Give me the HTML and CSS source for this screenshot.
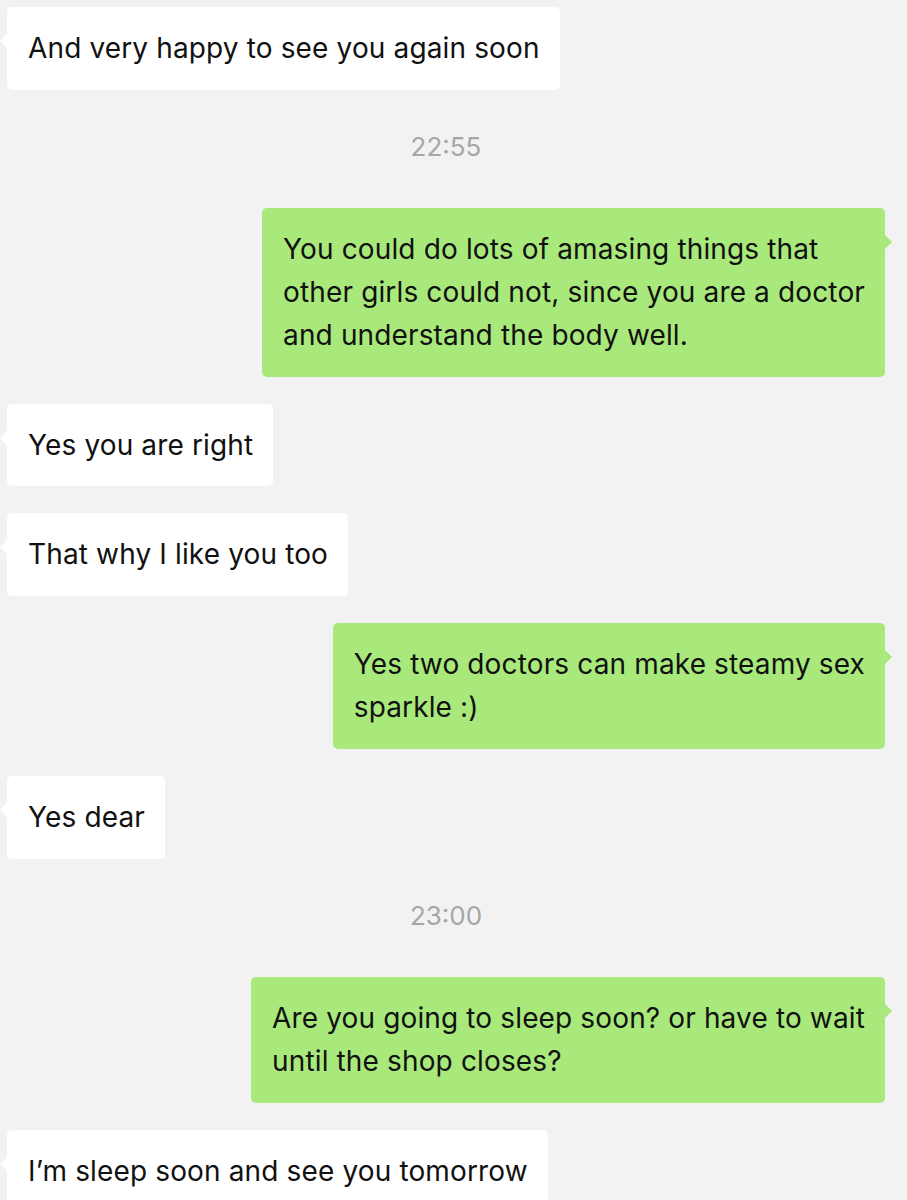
FILE: index.html
```html
<!DOCTYPE html>
<html lang="en">

<head>
    <meta charset="UTF-8">
    <meta name="viewport" content="width=device-width, initial-scale=1.0">
    <link rel="stylesheet" href="styles.css">
    <title>Chat</title>
</head>

<body>

    <div class="chat">
        <div class="msg in">And very happy to see you again soon</div>

        <div class="time">22:55</div>

        <div class="msg out">You could do lots of amasing things that<br>other girls could not, since you are a doctor<br>and understand the body well.</div>

        <div class="msg in">Yes you are right</div>

        <div class="msg in">That why I like you too</div>

        <div class="msg out">Yes two doctors can make steamy sex<br>sparkle :)</div>

        <div class="msg in">Yes dear</div>

        <div class="time">23:00</div>

        <div class="msg out">Are you going to sleep soon? or have to wait<br>until the shop closes?</div>

        <div class="msg in">I’m sleep soon and see you tomorrow</div>
    </div>

</body>

</html>
```

FILE: styles.css
```css
body {
    font-family: Inter, "Liberation Sans", sans-serif;
    background: #f2f2f2;
    margin: 0;
    padding: 0;
    overflow: hidden;
}

.chat {
    display: flex;
    flex-direction: column;
    gap: 27px;
    padding: 7px 22px 0 7px;
}

.msg {
    position: relative;
    max-width: 640px;
    padding: 20px 20px 19.8px 21px;
    border-radius: 5px;
    font-size: 28px;
    line-height: 43px;
    letter-spacing: 0.14px;
    white-space: nowrap;
    color: #111;
}

.msg.in {
    align-self: flex-start;
    background-color: #ffffff;
}

.msg.out {
    align-self: flex-end;
    background-color: #a9e97b;
}

/* petite pointe de la bulle */
.msg::before {
    content: "";
    position: absolute;
    top: 27px;
    border-top: 7px solid transparent;
    border-bottom: 7px solid transparent;
}

.msg.in::before {
    left: -7px;
    border-right: 7px solid #ffffff;
}

.msg.out::before {
    right: -7px;
    border-left: 7px solid #a9e97b;
}

.time {
    text-align: center;
    font-size: 26px;
    line-height: 30px;
    padding: 15px 0 19px;
    color: #a6a6a6;
}
```
